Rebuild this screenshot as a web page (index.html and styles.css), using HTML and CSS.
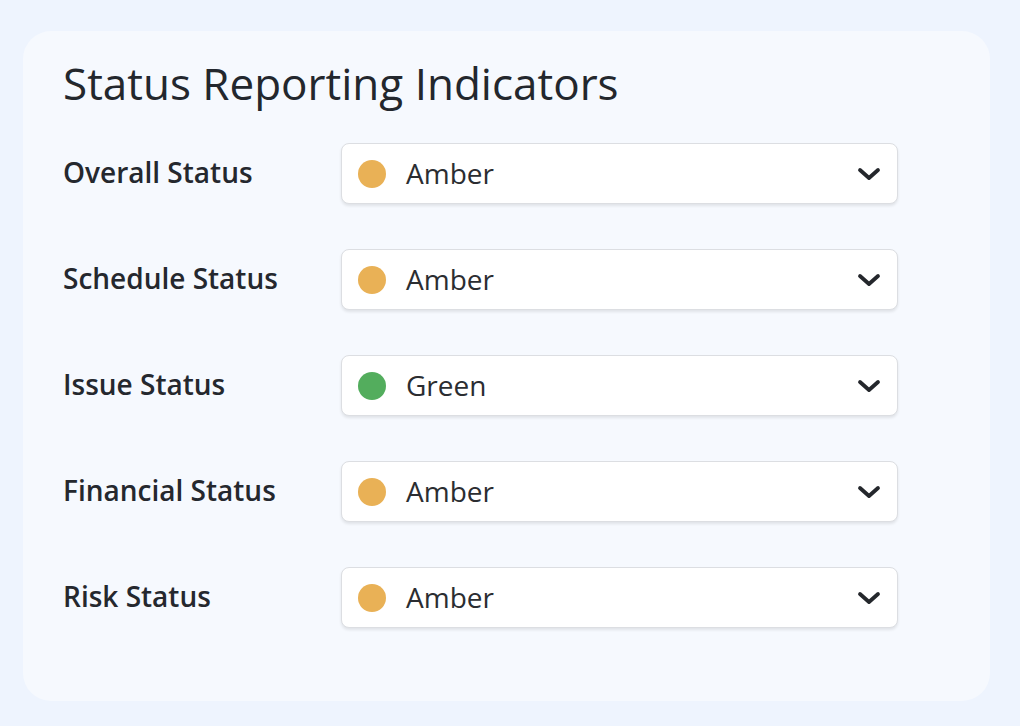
FILE: index.html
```html
<!DOCTYPE html>
<html>
<head>
<meta charset="utf-8">
<link rel="stylesheet" href="styles.css">
</head>
<body>
<div class="card">
  <h1 class="title">Status Reporting Indicators</h1>
  <div class="rows">
    <div class="row">
      <div class="label">Overall Status</div>
      <div class="select"><span class="dot amber"></span><span class="value">Amber</span>
        <svg class="chev" viewBox="0 0 24 14" width="24" height="14"><path d="M3 3 L12 11 L21 3" fill="none" stroke="#24272c" stroke-width="3.8" stroke-linecap="round" stroke-linejoin="round"/></svg></div>
    </div>
    <div class="row">
      <div class="label">Schedule Status</div>
      <div class="select"><span class="dot amber"></span><span class="value">Amber</span>
        <svg class="chev" viewBox="0 0 24 14" width="24" height="14"><path d="M3 3 L12 11 L21 3" fill="none" stroke="#24272c" stroke-width="3.8" stroke-linecap="round" stroke-linejoin="round"/></svg></div>
    </div>
    <div class="row">
      <div class="label">Issue Status</div>
      <div class="select"><span class="dot green"></span><span class="value">Green</span>
        <svg class="chev" viewBox="0 0 24 14" width="24" height="14"><path d="M3 3 L12 11 L21 3" fill="none" stroke="#24272c" stroke-width="3.8" stroke-linecap="round" stroke-linejoin="round"/></svg></div>
    </div>
    <div class="row">
      <div class="label">Financial Status</div>
      <div class="select"><span class="dot amber"></span><span class="value">Amber</span>
        <svg class="chev" viewBox="0 0 24 14" width="24" height="14"><path d="M3 3 L12 11 L21 3" fill="none" stroke="#24272c" stroke-width="3.8" stroke-linecap="round" stroke-linejoin="round"/></svg></div>
    </div>
    <div class="row">
      <div class="label">Risk Status</div>
      <div class="select"><span class="dot amber"></span><span class="value">Amber</span>
        <svg class="chev" viewBox="0 0 24 14" width="24" height="14"><path d="M3 3 L12 11 L21 3" fill="none" stroke="#24272c" stroke-width="3.8" stroke-linecap="round" stroke-linejoin="round"/></svg></div>
    </div>
  </div>
</div>
</body>
</html>
```

FILE: styles.css
```css
* { box-sizing: border-box; }
html, body { margin: 0; padding: 0; }
body {
  background: #eef4fe;
  font-family: "Open Sans", "Noto Sans", sans-serif;
  color: #25282e;
  width: 1020px;
  height: 726px;
  padding: 31px 30px 0 23px;
}
.card {
  background: #f6f9fe;
  border-radius: 28px;
  width: 967px;
  height: 670px;
  padding: 20px 40px 0 40px;
}
.title {
  margin: 0;
  font-weight: 400;
  font-size: 44px;
  line-height: 64px;
  letter-spacing: 0;
  color: #23272d;
}
.rows {
  margin-top: 28px;
  display: flex;
  flex-direction: column;
  gap: 45px;
}
.row {
  display: grid;
  grid-template-columns: 278px 557px;
  align-items: center;
}
.label {
  font-size: 28px;
  font-weight: 600;
  color: #25282e;
  padding-bottom: 3px;
}
.select {
  height: 61px;
  background: #fff;
  border: 1.5px solid #dcdee2;
  border-radius: 8px;
  box-shadow: 0 2px 3px rgba(0,0,0,0.09);
  display: flex;
  align-items: center;
  padding: 0 16px 0 16px;
}
.dot {
  width: 28px;
  height: 28px;
  border-radius: 50%;
  flex: none;
}
.amber { background: #e9b156; }
.green { background: #53ad5d; }
.value {
  margin-left: 20px;
  font-size: 28px;
  color: #2b2d31;
  flex: 1;
  padding-bottom: 2px;
}
.chev { flex: none; }
```
